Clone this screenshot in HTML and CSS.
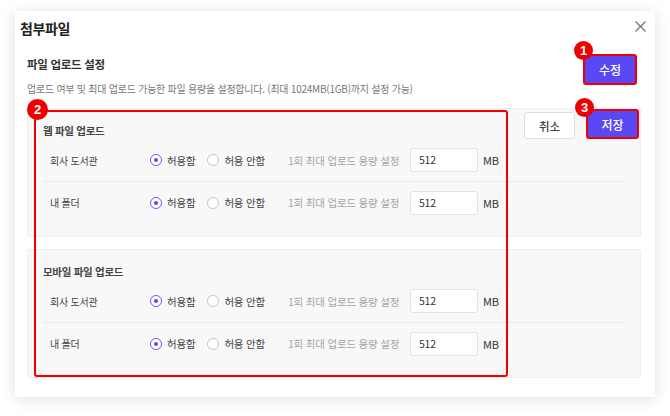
FILE: index.html
```html
<!DOCTYPE html>
<html lang="ko">
<head>
<meta charset="utf-8">
<link rel="stylesheet" href="styles.css">
</head>
<body>
<div class="modal">
  <div class="modal-head">
    <h1 class="modal-title">첨부파일</h1>
    <button class="close" aria-label="닫기">
      <svg width="11" height="11" viewBox="0 0 11 11"><path d="M0.5 0.5L10.5 10.5M10.5 0.5L0.5 10.5" stroke="#777" stroke-width="1.4" fill="none"/></svg>
    </button>
  </div>
  <div class="section-head">
    <div class="section-text">
      <h2 class="section-title">파일 업로드 설정</h2>
      <p class="section-desc">업로드 여부 및 최대 업로드 가능한 파일 용량을 설정합니다. (최대 1024MB(1GB)까지 설정 가능)</p>
    </div>
    <button class="btn-primary mark">수정<span class="badge badge-1">1</span></button>
  </div>
  <div class="panels">
    <div class="panel">
      <div class="panel-head">
        <h3 class="panel-title">웹 파일 업로드</h3>
        <div class="actions">
          <button class="btn-default">취소</button>
          <button class="btn-primary mark save">저장<span class="badge badge-3">3</span></button>
        </div>
      </div>
      <div class="row">
        <span class="row-label">회사 도서관</span>
        <label class="radio"><span class="dot on"></span>허용함</label>
        <label class="radio"><span class="dot"></span>허용 안함</label>
        <span class="limit">1회 최대 업로드 용량 설정</span>
        <span class="field">512</span>
        <span class="unit">MB</span>
      </div>
      <div class="row">
        <span class="row-label">내 폴더</span>
        <label class="radio"><span class="dot on"></span>허용함</label>
        <label class="radio"><span class="dot"></span>허용 안함</label>
        <span class="limit">1회 최대 업로드 용량 설정</span>
        <span class="field">512</span>
        <span class="unit">MB</span>
      </div>
    </div>
    <div class="panel">
      <div class="panel-head">
        <h3 class="panel-title">모바일 파일 업로드</h3>
      </div>
      <div class="row">
        <span class="row-label">회사 도서관</span>
        <label class="radio"><span class="dot on"></span>허용함</label>
        <label class="radio"><span class="dot"></span>허용 안함</label>
        <span class="limit">1회 최대 업로드 용량 설정</span>
        <span class="field">512</span>
        <span class="unit">MB</span>
      </div>
      <div class="row">
        <span class="row-label">내 폴더</span>
        <label class="radio"><span class="dot on"></span>허용함</label>
        <label class="radio"><span class="dot"></span>허용 안함</label>
        <span class="limit">1회 최대 업로드 용량 설정</span>
        <span class="field">512</span>
        <span class="unit">MB</span>
      </div>
    </div>
    <div class="highlight"><span class="badge badge-2">2</span></div>
  </div>
</div>
</body>
</html>
```
FILE: styles.css
```css
* { box-sizing: border-box; }
html, body { margin: 0; padding: 0; background: #fff; }
body {
  font-family: "Noto Sans CJK KR", "Noto Sans", sans-serif;
  color: #333;
  width: 670px;
  height: 416px;
  overflow: hidden;
}
button { font-family: inherit; cursor: pointer; }
h1, h2, h3, p { margin: 0; }

.modal {
  margin: 11px 0 0 15px;
  width: 640px;
  height: 386px;
  background: #fff;
  box-shadow: 0 2px 14px rgba(0, 0, 0, 0.13);
  padding: 0 14px 0 12px;
}
.modal-head {
  display: flex;
  justify-content: space-between;
  align-items: flex-start;
  padding-top: 7px;
  height: 27px;
}
.modal-title {
  margin-left: -7px;
  font-size: 14px;
  font-weight: 700;
  line-height: 20px;
  letter-spacing: -0.4px;
  color: #222;
}
.close {
  border: 0;
  background: none;
  padding: 0;
  margin-right: -5px;
  margin-top: 3px;
  width: 11px;
  height: 11px;
  display: flex;
}

.section-head {
  display: flex;
  justify-content: space-between;
  align-items: flex-start;
  margin-top: 16px;
  padding-right: 4px;
}
.section-title {
  margin-top: 1px;
  font-size: 11.5px;
  font-weight: 700;
  line-height: 18px;
  letter-spacing: -0.3px;
  color: #333;
}
.section-desc {
  margin-top: 8px;
  font-size: 10px;
  line-height: 16px;
  color: #777;
  letter-spacing: -0.25px;
}

.btn-primary {
  position: relative;
  height: 31px;
  width: 54px;
  background: #5b48f5;
  color: #fff;
  font-size: 12px;
  font-weight: 500;
  border-radius: 3px;
  border: 0;
  padding: 0;
}
.btn-primary.mark { border: 2px solid #f20000; }
.btn-primary.save { height: 30px; width: 53px; margin-top: -2px; }
.btn-default {
  height: 27px;
  width: 51px;
  background: #fff;
  border: 1px solid #ddd;
  border-radius: 3px;
  color: #444;
  font-size: 11.5px;
  font-weight: 500;
  padding: 0;
}

.badge {
  position: absolute;
  width: 19px;
  height: 19px;
  border-radius: 50%;
  background: #ee0000;
  color: #fff;
  font-size: 13px;
  font-weight: 700;
  line-height: 19px;
  text-align: center;
  font-family: "Liberation Sans", sans-serif;
}
.badge-1 { left: -11px; top: -15px; }
.badge-3 { left: -13px; top: -13px; }
.badge-2 { left: -9px; top: -13px; width: 21px; height: 21px; line-height: 21px; }

.panels {
  position: relative;
  margin-top: 11px;
  display: flex;
  flex-direction: column;
  gap: 12px;
}
.panel {
  background: #f8f8f8;
  border: 1px solid #efefef;
  border-radius: 2px;
  padding: 2px 15px 13px 15px;
}
.panel-head {
  display: flex;
  align-items: flex-end;
  justify-content: space-between;
  min-height: 28px;
}
.panel-title {
  font-size: 10.5px;
  font-weight: 700;
  line-height: 17px;
  color: #444;
  letter-spacing: -0.3px;
}
.actions {
  display: flex;
  align-items: flex-end;
  gap: 11px;
  margin-right: -14px;
}

.row {
  display: flex;
  align-items: center;
  height: 42px;
  padding-left: 7px;
  font-size: 10.5px;
  color: #444;
  letter-spacing: -0.2px;
}
.row + .row { border-top: 1px solid #e9e9e9; }
.row-label { width: 100px; font-size: 10px; }
.radio {
  display: flex;
  align-items: center;
  gap: 5px;
  margin-right: 12px;
}
.dot {
  width: 12px;
  height: 12px;
  border-radius: 50%;
  border: 1px solid #c8c8c8;
  background: #fff;
  display: inline-block;
  position: relative;
}
.dot.on { border-color: #6b5cf7; }
.dot.on::after {
  content: "";
  position: absolute;
  left: 3px; top: 3px;
  width: 4px; height: 4px;
  border-radius: 50%;
  background: #5b48f5;
}
.limit {
  margin-left: 11px;
  color: #a5a5a5;
  width: 122px;
}
.field {
  width: 68px;
  height: 24px;
  background: #fff;
  border: 1px solid #e3e3e3;
  border-radius: 3px;
  padding-left: 8px;
  line-height: 22px;
  font-size: 10.5px;
  color: #333;
}
.unit {
  margin-left: 5px;
  color: #333;
  font-size: 11px;
}

.highlight {
  position: absolute;
  left: 7px;
  top: 2px;
  width: 474px;
  height: 267px;
  border: 2.5px solid #f20000;
  border-radius: 3px;
  pointer-events: none;
}
```
